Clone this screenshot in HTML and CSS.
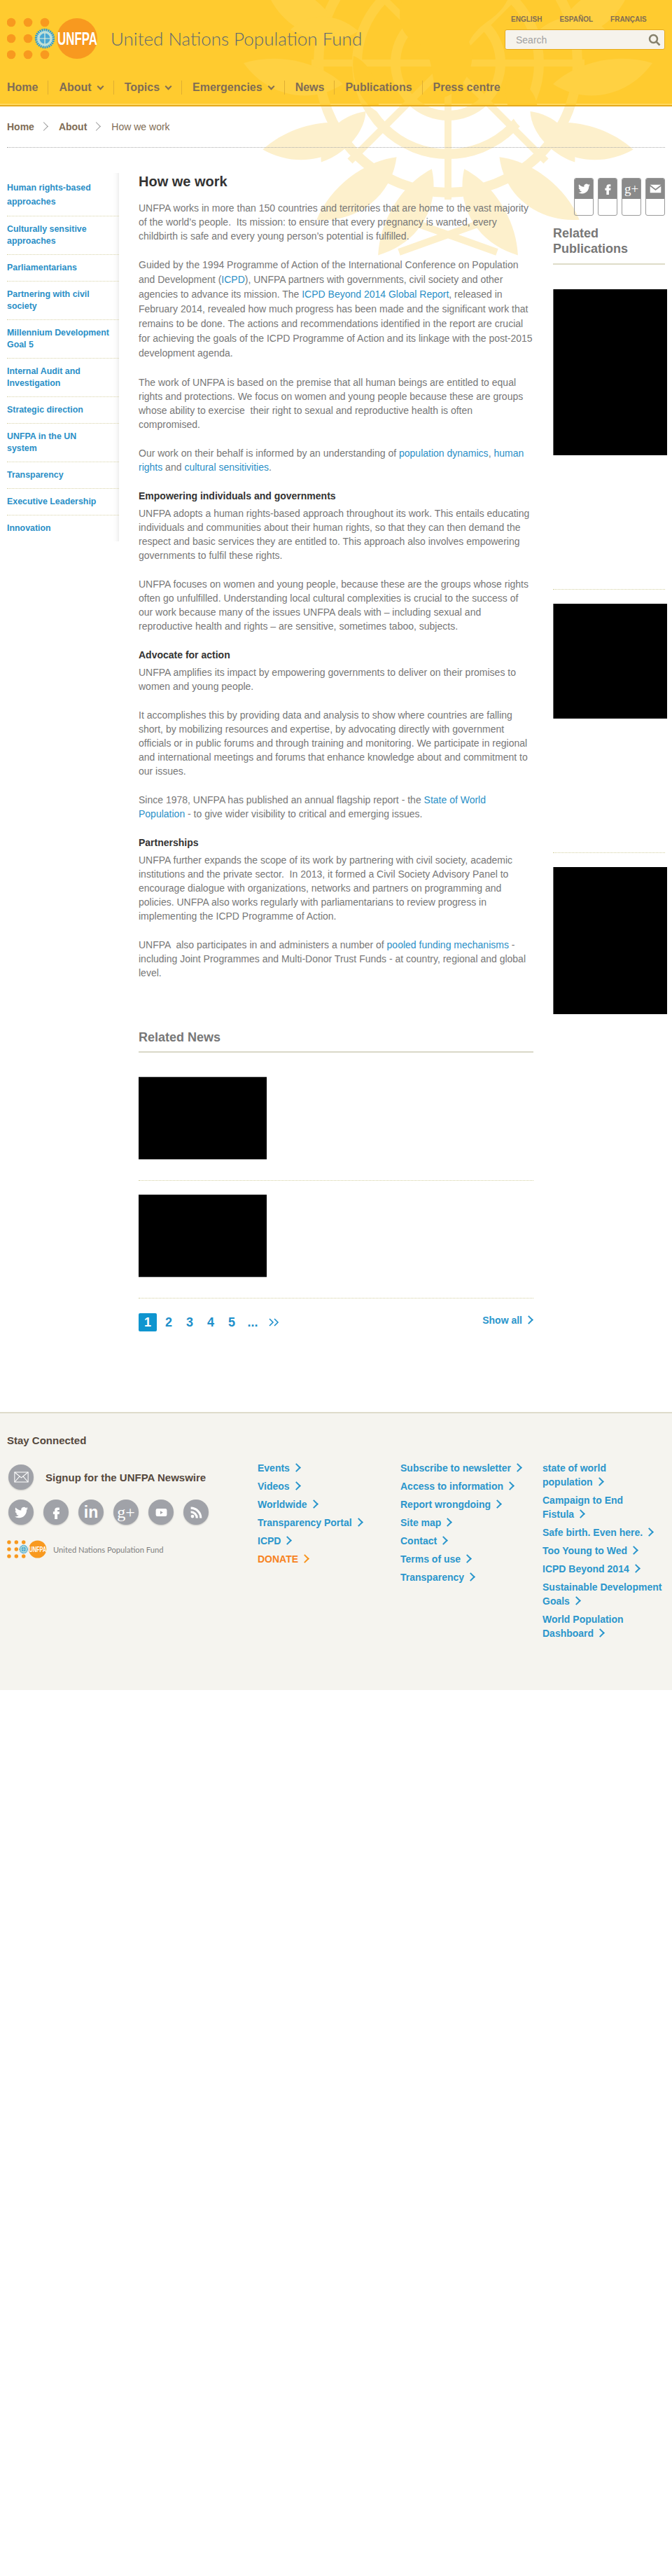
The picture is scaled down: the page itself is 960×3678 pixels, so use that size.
FILE: index.html
```html
<!DOCTYPE html>
<html lang="en">
<head>
    <meta charset="UTF-8">
    <meta name="viewport" content="width=device-width, initial-scale=1.0">
    <title>How we work</title>
    <link rel="stylesheet" href="styles.css">
</head>
<body>
    <svg class="icon-defs" width="0" height="0" aria-hidden="true">
        <defs>
            <path id="leaf" d="M300 8 C345 40 362 100 330 150 C300 118 284 60 300 8Z"/>
            <path id="leaf-in" d="M300 70 C270 90 262 130 282 165 C305 145 312 105 300 70Z"/>
            <symbol id="un-emblem" viewBox="0 0 600 600">
                <g fill="none" stroke="currentColor" stroke-width="14">
                    <circle cx="300" cy="300" r="75"/>
                    <circle cx="300" cy="300" r="130"/>
                    <circle cx="300" cy="300" r="185"/>
                    <path stroke-width="10" d="M300 105V495M105 300H495M160 160L440 440M440 160L160 440"/>
                </g>
                <g class="land">
                    <path d="M245 190 C290 170 350 175 385 210 C370 240 345 240 330 270 C345 300 320 345 290 350 C270 320 285 290 255 270 C225 260 225 215 245 190Z"/>
                    <path d="M165 290 C190 300 205 335 200 370 C180 360 160 330 165 290Z"/>
                    <path d="M385 320 C420 325 440 360 420 400 C395 395 375 355 385 320Z"/>
                </g>
                <g fill="currentColor">
                    <use href="#leaf" transform="rotate(15 300 300)"/>
                    <use href="#leaf" transform="rotate(40 300 300)"/>
                    <use href="#leaf" transform="rotate(65 300 300)"/>
                    <use href="#leaf" transform="rotate(90 300 300)"/>
                    <use href="#leaf" transform="rotate(115 300 300)"/>
                    <use href="#leaf" transform="rotate(140 300 300)"/>
                    <use href="#leaf" transform="rotate(160 300 300)"/>
                    <use href="#leaf-in" transform="rotate(28 300 300)"/>
                    <use href="#leaf-in" transform="rotate(78 300 300)"/>
                    <use href="#leaf-in" transform="rotate(128 300 300)"/>
                    <use href="#leaf" transform="translate(600 0) scale(-1 1) rotate(15 300 300)"/>
                    <use href="#leaf" transform="translate(600 0) scale(-1 1) rotate(40 300 300)"/>
                    <use href="#leaf" transform="translate(600 0) scale(-1 1) rotate(65 300 300)"/>
                    <use href="#leaf" transform="translate(600 0) scale(-1 1) rotate(90 300 300)"/>
                    <use href="#leaf" transform="translate(600 0) scale(-1 1) rotate(115 300 300)"/>
                    <use href="#leaf" transform="translate(600 0) scale(-1 1) rotate(140 300 300)"/>
                    <use href="#leaf" transform="translate(600 0) scale(-1 1) rotate(160 300 300)"/>
                    <use href="#leaf-in" transform="translate(600 0) scale(-1 1) rotate(28 300 300)"/>
                    <use href="#leaf-in" transform="translate(600 0) scale(-1 1) rotate(78 300 300)"/>
                    <use href="#leaf-in" transform="translate(600 0) scale(-1 1) rotate(128 300 300)"/>
                </g>
                <path fill="none" stroke="currentColor" stroke-width="10" d="M230 570L370 520M370 570L230 520"/>
            </symbol>
            <symbol id="unfpa-logo" viewBox="10 25 130 60">
                <g fill="#f8991f">
                    <circle cx="16" cy="32" r="6.3"/><circle cx="40" cy="32" r="6.3"/><circle cx="64" cy="32" r="6.3"/>
                    <circle cx="16" cy="55" r="6.3"/><circle cx="40" cy="55" r="6.3"/>
                    <circle cx="16" cy="78" r="6.3"/><circle cx="40" cy="78" r="6.3"/><circle cx="64" cy="78" r="6.3"/>
                    <circle cx="110" cy="55" r="29"/>
                </g>
                <circle cx="64" cy="55" r="12.5" fill="#bfe0d8" stroke="#2f9bd0" stroke-width="3.5" stroke-dasharray="2 1"/>
                <circle cx="64" cy="55" r="7.5" fill="#4aa8d4"/>
                <path d="M64 47V63M56 55H72" stroke="#e6f1d8" stroke-width="1.2"/>
                <text x="82" y="64" class="logo-word" textLength="57" lengthAdjust="spacingAndGlyphs">UNFPA</text>
            </symbol>
            <symbol id="i-twitter" viewBox="0 0 24 24">
                <path d="M23.95 4.57a10 10 0 01-2.82.77 4.96 4.96 0 002.16-2.72c-.95.56-2 .96-3.13 1.19a4.92 4.92 0 00-8.38 4.48C7.69 8.1 4.07 6.13 1.64 3.16a4.82 4.82 0 00-.67 2.48c0 1.71.87 3.21 2.19 4.1a4.9 4.9 0 01-2.23-.62v.06a4.92 4.92 0 003.95 4.83 5 5 0 01-2.21.08 4.94 4.94 0 004.6 3.42 9.87 9.87 0 01-6.1 2.1c-.39 0-.78-.02-1.17-.06a14 14 0 007.56 2.21c9.05 0 14-7.5 14-13.99 0-.21 0-.42-.02-.63A9.94 9.94 0 0024 4.59z"/>
            </symbol>
            <symbol id="i-facebook" viewBox="0 0 24 24">
                <path d="M14.5 7.5h3V3h-3.6C10.6 3 9 5 9 7.8V10.5H6.2V15H9v9h5v-9h3.2l.6-4.5H14V8.4c0-.6.1-.9.5-.9z"/>
            </symbol>
            <symbol id="i-mail" viewBox="0 0 24 18">
                <path d="M1 1h22L12 9.5z"/>
                <path d="M1 4v13h22V4L12 12.5z"/>
            </symbol>
        </defs>
    </svg>

    <svg class="emblem emblem-page" aria-hidden="true"><use href="#un-emblem"/></svg>

    <header class="site-header">
        <svg class="emblem emblem-header" aria-hidden="true"><use href="#un-emblem"/></svg>
        <div class="header-top">
            <a class="brand" href="#">
                <svg class="brand-logo"><use href="#unfpa-logo"/></svg>
                <span class="brand-name">United Nations Population Fund</span>
            </a>
            <div class="header-tools">
                <ul class="lang-list">
                    <li><a href="#">ENGLISH</a></li>
                    <li><a href="#">ESPAÑOL</a></li>
                    <li><a href="#">FRANÇAIS</a></li>
                </ul>
                <form class="search-box">
                    <input type="text" placeholder="Search">
                    <svg class="search-icon" viewBox="0 0 18 18"><circle cx="7.5" cy="7.5" r="5.5"/><path d="M11.5 11.5L16.5 16.5"/></svg>
                </form>
            </div>
        </div>
        <nav class="main-nav">
            <a href="#">Home</a>
            <a class="has-sub" href="#">About</a>
            <a class="has-sub" href="#">Topics</a>
            <a class="has-sub" href="#">Emergencies</a>
            <a href="#">News</a>
            <a href="#">Publications</a>
            <a href="#">Press centre</a>
        </nav>
    </header>

    <div class="breadcrumb">
        <a href="#">Home</a>
        <a href="#">About</a>
        <span>How we work</span>
    </div>

    <div class="columns">
        <ul class="side-nav">
            <li class="first"><a href="#">Human rights-based<br>approaches</a></li>
            <li><a href="#">Culturally sensitive<br>approaches</a></li>
            <li><a href="#">Parliamentarians</a></li>
            <li><a href="#">Partnering with civil<br>society</a></li>
            <li><a href="#">Millennium Development<br>Goal 5</a></li>
            <li><a href="#">Internal Audit and<br>Investigation</a></li>
            <li><a href="#">Strategic direction</a></li>
            <li><a href="#">UNFPA in the UN<br>system</a></li>
            <li><a href="#">Transparency</a></li>
            <li><a href="#">Executive Leadership</a></li>
            <li><a href="#">Innovation</a></li>
        </ul>

        <main class="content">
            <h1>How we work</h1>
            <p>UNFPA works in more than 150 countries and territories that are home to the vast majority of the world’s people. &nbsp;Its mission: to ensure that every pregnancy is wanted, every childbirth is safe and every young person’s potential is fulfilled.</p>
            <p class="tall">Guided by the 1994 Programme of Action of the International Conference on Population and Development (<a href="#">ICPD</a>), UNFPA partners with governments, civil society and other agencies to advance its mission. The <a href="#">ICPD Beyond 2014 Global Report</a>, released in February 2014, revealed how much progress has been made and the significant work that remains to be done. The actions and recommendations identified in the report are crucial for achieving the goals of the ICPD Programme of Action and its linkage with the post-2015 development agenda.</p>
            <p>The work of UNFPA is based on the premise that all human beings are entitled to equal rights and protections. We focus on women and young people because these are groups whose ability to exercise &nbsp;their right to sexual and reproductive health is often compromised.</p>
            <p>Our work on their behalf is informed by an understanding of <a href="#">population dynamics</a>, <a href="#">human rights</a> and <a href="#">cultural sensitivities</a>.</p>
            <h3>Empowering individuals and governments</h3>
            <p>UNFPA adopts a human rights-based approach throughout its work. This entails educating individuals and communities about their human rights, so that they can then demand the respect and basic services they are entitled to. This approach also involves empowering governments to fulfil these rights.</p>
            <p>UNFPA focuses on women and young people, because these are the groups whose rights often go unfulfilled. Understanding local cultural complexities is crucial to the success of our work because many of the issues UNFPA deals with – including sexual and reproductive health and rights – are sensitive, sometimes taboo, subjects.</p>
            <h3>Advocate for action</h3>
            <p>UNFPA amplifies its impact by empowering governments to deliver on their promises to women and young people.</p>
            <p>It accomplishes this by providing data and analysis to show where countries are falling short, by mobilizing resources and expertise, by advocating directly with government officials or in public forums and through training and monitoring. We participate in regional and international meetings and forums that enhance knowledge about and commitment to our issues.</p>
            <p>Since 1978, UNFPA has published an annual flagship report - the <a href="#">State of World Population</a> - to give wider visibility to critical and emerging issues.</p>
            <h3>Partnerships</h3>
            <p>UNFPA further expands the scope of its work by partnering with civil society, academic institutions and the private sector. &nbsp;In 2013, it formed a Civil Society Advisory Panel to encourage dialogue with organizations, networks and partners on programming and policies. UNFPA also works regularly with parliamentarians to review progress in implementing the ICPD Programme of Action.</p>
            <p>UNFPA &nbsp;also participates in and administers a number of <a href="#">pooled funding mechanisms</a> - including Joint Programmes and Multi-Donor Trust Funds - at country, regional and global level.</p>

            <section class="related-news">
                <h2>Related News</h2>
                <div class="news-item"><div class="news-thumb"></div></div>
                <div class="news-item"><div class="news-thumb"></div></div>
                <div class="pager-row">
                    <ul class="pager">
                        <li class="current"><a href="#">1</a></li>
                        <li><a href="#">2</a></li>
                        <li><a href="#">3</a></li>
                        <li><a href="#">4</a></li>
                        <li><a href="#">5</a></li>
                        <li><span>...</span></li>
                        <li><a href="#"><svg class="pager-next" viewBox="0 0 15 12"><path d="M1 1L6 6L1 11M8 1L13 6L8 11"/></svg></a></li>
                    </ul>
                    <a class="more show-all" href="#">Show all</a>
                </div>
            </section>
        </main>

        <aside class="right-col">
            <div class="share-row">
                <a class="share" href="#"><span class="share-top"><svg class="share-glyph"><use href="#i-twitter"/></svg></span></a>
                <a class="share" href="#"><span class="share-top"><svg class="share-glyph"><use href="#i-facebook"/></svg></span></a>
                <a class="share" href="#"><span class="share-top gplus">g+</span></a>
                <a class="share" href="#"><span class="share-top"><svg class="share-glyph"><use href="#i-mail"/></svg></span></a>
            </div>
            <h2>Related Publications</h2>
            <div class="pub-item pub-one"><div class="pub-thumb"></div></div>
            <div class="pub-item pub-two"><div class="pub-thumb"></div></div>
            <div class="pub-item pub-three"><div class="pub-thumb"></div></div>
        </aside>
    </div>

    <footer class="site-footer">
        <div class="footer-left">
            <h4>Stay Connected</h4>
            <a class="signup" href="#">
                <span class="round"><svg class="round-mail" viewBox="0 0 24 18"><path d="M1 1h22v16H1z"/><path d="M1 1l11 9 11-9M1 17l8-9M23 17l-8-9"/></svg></span>
                <span>Signup for the UNFPA Newswire</span>
            </a>
            <div class="social-row">
                <a class="round" href="#"><svg class="round-glyph"><use href="#i-twitter"/></svg></a>
                <a class="round" href="#"><svg class="round-glyph"><use href="#i-facebook"/></svg></a>
                <a class="round round-text" href="#">in</a>
                <a class="round round-text gplus" href="#">g+</a>
                <a class="round" href="#"><svg class="round-glyph" viewBox="0 0 24 24"><path d="M5 5h14a3 3 0 013 3v8a3 3 0 01-3 3H5a3 3 0 01-3-3V8a3 3 0 013-3zM10 9v6l5-3z" fill-rule="evenodd"/></svg></a>
                <a class="round" href="#"><svg class="round-glyph" viewBox="0 0 24 24"><circle cx="5" cy="19" r="3"/><path d="M2 9a13 13 0 0113 13h-4a9 9 0 00-9-9zM2 2a20 20 0 0120 20h-4A16 16 0 002 6z"/></svg></a>
            </div>
            <div class="footer-brand">
                <svg class="footer-logo"><use href="#unfpa-logo"/></svg>
                <span>United Nations Population Fund</span>
            </div>
        </div>
        <ul class="footer-col col-a">
            <li><a class="more" href="#">Events</a></li>
            <li><a class="more" href="#">Videos</a></li>
            <li><a class="more" href="#">Worldwide</a></li>
            <li><a class="more" href="#">Transparency Portal</a></li>
            <li><a class="more" href="#">ICPD</a></li>
            <li><a class="more donate" href="#">DONATE</a></li>
        </ul>
        <ul class="footer-col col-b">
            <li><a class="more" href="#">Subscribe to newsletter</a></li>
            <li><a class="more" href="#">Access to information</a></li>
            <li><a class="more" href="#">Report wrongdoing</a></li>
            <li><a class="more" href="#">Site map</a></li>
            <li><a class="more" href="#">Contact</a></li>
            <li><a class="more" href="#">Terms of use</a></li>
            <li><a class="more" href="#">Transparency</a></li>
        </ul>
        <ul class="footer-col col-c">
            <li><a class="more" href="#">state of world<br>population</a></li>
            <li><a class="more" href="#">Campaign to End<br>Fistula</a></li>
            <li><a class="more" href="#">Safe birth. Even here.</a></li>
            <li><a class="more" href="#">Too Young to Wed</a></li>
            <li><a class="more" href="#">ICPD Beyond 2014</a></li>
            <li><a class="more" href="#">Sustainable Development<br>Goals</a></li>
            <li><a class="more" href="#">World Population<br>Dashboard</a></li>
        </ul>
    </footer>
</body>
</html>
```

FILE: styles.css
```css
body {
    margin: 0;
    background-color: white;
    font-family: "Liberation Sans", Arial, sans-serif;
    font-size: 14px;
    color: #777;
}

a {
    color: #2a8fc7;
    text-decoration: none;
}

ul {
    margin: 0;
    padding: 0;
    list-style: none;
}

.icon-defs {
    position: absolute;
}

.land {
    fill: var(--ground);
}

.logo-word {
    font-family: "Liberation Sans", Arial, sans-serif;
    font-weight: bold;
    font-size: 25px;
    fill: white;
}

/* the big UN emblem behind the top of the page */
.emblem {
    position: absolute;
    left: 340px;
    top: -210px;
    width: 600px;
    height: 600px;
}

.emblem-page {
    z-index: -1;
    color: #fdf0cc;
    --ground: white;
}

.emblem-header {
    color: #ffd142;
    --ground: #ffcb2f;
}

/* header */
.site-header {
    position: relative;
    height: 150px;
    overflow: hidden;
    background-color: #ffcb2f;
    border-bottom: 2px solid #e5aa1e;
    box-shadow: inset 0 -2px 0 #ffd95f;
}

.header-top {
    position: relative;
    display: flex;
    justify-content: space-between;
    height: 110px;
}

.brand {
    display: flex;
    align-items: center;
    padding: 25px 0 25px 10px;
    height: 60px;
}

.brand-logo {
    width: 130px;
    height: 60px;
}

.brand-name {
    margin-left: 18px;
    font-family: Lato, sans-serif;
    font-weight: 300;
    font-size: 26px;
    color: #5d6872;
}

.header-tools {
    padding: 20px 10px 0 0;
    width: 229px;
}

.lang-list {
    display: flex;
    gap: 25px;
    padding-left: 9px;
    height: 22px;
    line-height: 12px;
}

.lang-list a {
    font-size: 10px;
    font-weight: bold;
    color: #7f6d55;
}

.search-box {
    position: relative;
    height: 29px;
}

.search-box input {
    box-sizing: border-box;
    width: 229px;
    height: 29px;
    padding: 0 30px 0 15px;
    background-color: #f6f3ec;
    border: 1px solid #e5aa1e;
    border-radius: 3px;
    font-family: inherit;
    font-size: 14px;
}

.search-box input::placeholder {
    color: #a2a2a2;
}

.search-icon {
    position: absolute;
    right: 6px;
    top: 6px;
    width: 18px;
    height: 18px;
    fill: none;
    stroke: #85806c;
    stroke-width: 2.5;
}

.main-nav {
    position: relative;
    display: flex;
    padding: 5px 0 0 10px;
}

.main-nav a {
    padding: 0 14px 0 15px;
    border-left: 1px solid #dfae33;
    line-height: 20px;
    font-size: 16px;
    font-weight: bold;
    color: #7f6d55;
}

.main-nav a:first-child {
    padding-left: 0;
    border-left: none;
}

.main-nav .has-sub::after {
    content: "";
    display: inline-block;
    width: 5px;
    height: 5px;
    margin: 0 1px 3px 9px;
    border-right: 2px solid #7f6d55;
    border-bottom: 2px solid #7f6d55;
    transform: rotate(45deg);
}

/* breadcrumb */
.breadcrumb {
    display: flex;
    align-items: center;
    height: 58px;
    margin: 0 10px;
    border-bottom: 1px dotted #aaa;
    font-size: 14px;
    color: #7f6d55;
}

.breadcrumb a {
    font-weight: bold;
    color: #7f6d55;
}

.breadcrumb a::after {
    content: "";
    display: inline-block;
    width: 8px;
    height: 8px;
    margin: 0 17px 1px 9px;
    border-top: 1px solid #999;
    border-right: 1px solid #999;
    transform: rotate(45deg);
}

/* columns */
.columns {
    display: grid;
    grid-template-columns: 160px 564px 160px;
    column-gap: 28px;
    padding: 36px 10px 0;
}

.side-nav {
    align-self: start;
    padding-top: 1px;
    box-shadow: inset -9px 0 9px -9px rgba(0, 0, 0, 0.13);
}

.side-nav li {
    padding: 10px 0;
    border-bottom: 1px dotted #d8d3a8;
    line-height: 17px;
}

.side-nav li:last-child {
    border-bottom: none;
}

.side-nav .first {
    line-height: 20px;
}

.side-nav a {
    display: block;
    font-size: 12.4px;
    font-weight: bold;
}

.content h1 {
    margin: 0 0 16px;
    line-height: 24px;
    font-size: 20px;
    color: #333;
}

.content p {
    margin: 0 0 21px;
    line-height: 20px;
}

.content p.tall {
    line-height: 21px;
}

.content h3 {
    margin: 0 0 5px;
    line-height: 20px;
    font-size: 14px;
    color: #333;
}

.related-news {
    margin-top: 72px;
}

.related-news h2 {
    margin: 0 0 34px;
    padding-bottom: 10px;
    border-bottom: 2px solid #d9d8c8;
    line-height: 20px;
    font-size: 18px;
    color: #777;
}

.news-item {
    height: 148px;
    margin-bottom: 19px;
    border-bottom: 1px dotted #d3cf9f;
}

.news-thumb {
    box-sizing: border-box;
    width: 183px;
    height: 119px;
    background-color: black;
    border-top: 1px solid #b5b5b5;
    border-bottom: 1px solid #b5b5b5;
}

.pager-row {
    display: flex;
    justify-content: space-between;
    margin-top: 21px;
}

.pager {
    display: flex;
    gap: 4px;
}

.pager li {
    width: 26px;
    height: 26px;
    line-height: 26px;
    text-align: center;
    font-size: 18px;
    font-weight: bold;
    color: #1e8fca;
}

.pager a {
    color: #1e8fca;
}

.pager .current {
    background-color: #0f95cf;
    border-radius: 2px;
}

.pager .current a {
    color: white;
}

.pager-next {
    width: 15px;
    height: 12px;
    fill: none;
    stroke: #1e8fca;
    stroke-width: 1.6;
}

.show-all {
    line-height: 20px;
}

/* right column */
.right-col {
    padding-top: 7px;
}

.right-col h2 {
    margin: 14px 0 35px;
    padding-bottom: 10px;
    border-bottom: 2px solid #dedcc8;
    line-height: 22px;
    font-size: 18px;
    color: #777;
}

.share-row {
    display: flex;
    justify-content: flex-end;
    gap: 6px;
}

.share {
    box-sizing: border-box;
    width: 28px;
    height: 54px;
    border: 1px solid #999;
    border-radius: 3px;
    overflow: hidden;
}

.share-top {
    display: flex;
    align-items: center;
    justify-content: center;
    height: 29px;
    background-color: #8a8a8a;
    color: white;
}

.share-glyph {
    width: 17px;
    height: 17px;
    fill: white;
}

.gplus {
    font-family: "Liberation Serif", serif;
    font-size: 19px;
}

.pub-item {
    padding-bottom: 191px;
    margin-bottom: 20px;
    border-bottom: 1px dotted #d3cf9f;
}

.pub-three {
    padding-bottom: 0;
    margin-bottom: 0;
    border-bottom: none;
}

.pub-thumb {
    box-sizing: border-box;
    width: 163px;
    background-color: black;
    border-left: 1px solid #666;
}

.pub-one .pub-thumb {
    height: 237px;
}

.pub-two .pub-thumb {
    height: 164px;
}

.pub-three .pub-thumb {
    height: 210px;
}

/* footer */
.site-footer {
    display: flex;
    height: 395px;
    margin-top: 115px;
    background-color: #f5f4ef;
    border-top: 2px solid #dedbcb;
    font-size: 14px;
}

.footer-left {
    box-sizing: border-box;
    width: 368px;
    padding: 29px 0 0 10px;
}

.footer-left h4 {
    margin: 0 0 24px;
    line-height: 20px;
    font-size: 15px;
    color: #55493e;
}

.signup {
    display: flex;
    align-items: center;
    gap: 17px;
    margin: 0 0 14px 2px;
    font-size: 15px;
    font-weight: bold;
    color: #55493e;
}

.round {
    flex: none;
    display: flex;
    align-items: center;
    justify-content: center;
    width: 36px;
    height: 36px;
    background-color: #a0a2a8;
    border-radius: 50%;
    box-shadow: 0 1px 2px rgba(0, 0, 0, 0.2);
    color: white;
}

.round-mail {
    width: 21px;
    height: 16px;
    fill: none;
    stroke: white;
    stroke-width: 1.2;
}

.round-glyph {
    width: 19px;
    height: 19px;
    fill: white;
}

.round-text {
    font-size: 23px;
    font-weight: bold;
}

.round-text.gplus {
    font-size: 24px;
    font-weight: normal;
}

.social-row {
    display: flex;
    gap: 14px;
    margin-left: 2px;
}

.footer-brand {
    display: flex;
    align-items: center;
    margin-top: 22px;
    font-family: Lato, sans-serif;
    font-size: 11.2px;
    color: #808080;
}

.footer-logo {
    width: 57px;
    height: 26px;
    margin-right: 9px;
}

.footer-col {
    box-sizing: border-box;
    padding-top: 68px;
    line-height: 20px;
    font-weight: bold;
}

.footer-col li {
    margin-bottom: 6px;
}

.col-a {
    width: 204px;
}

.col-b {
    width: 203px;
}

.col-c {
    width: 175px;
}

.more {
    color: #2a96cc;
    font-weight: bold;
}

.more::after {
    content: "";
    display: inline-block;
    width: 7px;
    height: 7px;
    margin: 0 2px 1px 5px;
    border-top: 2px solid #2a96cc;
    border-right: 2px solid #2a96cc;
    transform: rotate(45deg);
}

.donate {
    color: #f7821e;
}

.donate::after {
    border-color: #f7941e;
}
```
